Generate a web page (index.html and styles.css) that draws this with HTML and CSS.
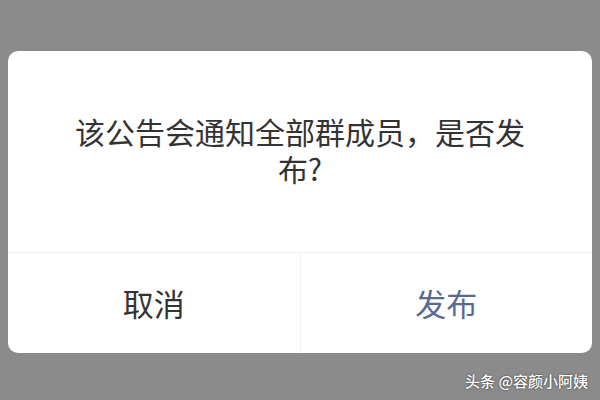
FILE: index.html
```html
<!DOCTYPE html>
<html>
<head>
  <meta charset="utf-8">
  <title>发布群公告</title>
  <link rel="stylesheet" href="styles.css">
</head>
<body>
  <div class="dialog">
    <div class="dialog-body">该公告会通知全部群成员，是否发布?</div>
    <div class="dialog-actions">
      <button class="action cancel">取消</button>
      <button class="action confirm">发布</button>
    </div>
  </div>
  <div class="watermark">头条 @容颜小阿姨</div>
</body>
</html>
```

FILE: styles.css
```css
html, body {
  height: 100%;
}
body {
  margin: 0;
  background-color: #8b8b8b;
  font-family: "Noto Sans CJK SC", "Noto Sans", sans-serif;
  padding: 51px 8px 0 8px;
  box-sizing: border-box;
  position: relative;
  overflow: hidden;
}
.dialog {
  background: #fff;
  border-radius: 10px;
  overflow: hidden;
  height: 302px;
  display: flex;
  flex-direction: column;
}
.dialog-body {
  height: 201px;
  box-sizing: border-box;
  padding: 62px 58px 0 58px;
  font-size: 30px;
  line-height: 37px;
  color: #333;
  text-align: center;
}
.dialog-actions {
  flex: 1;
  display: flex;
  border-top: 1px solid #f1f1f1;
}
.action {
  flex: 1;
  background: none;
  border: none;
  margin: 0;
  padding: 0 0 2px 0;
  font-family: inherit;
  font-size: 31px;
  cursor: pointer;
}
.cancel {
  color: #333;
  border-right: 1px solid #f1f1f1;
}
.confirm {
  color: #576b95;
}
.watermark {
  position: absolute;
  right: 12px;
  bottom: 9px;
  font-size: 15px;
  font-weight: 500;
  color: #fff;
  text-shadow: 0 0 2px rgba(0, 0, 0, 0.7);
}
```
